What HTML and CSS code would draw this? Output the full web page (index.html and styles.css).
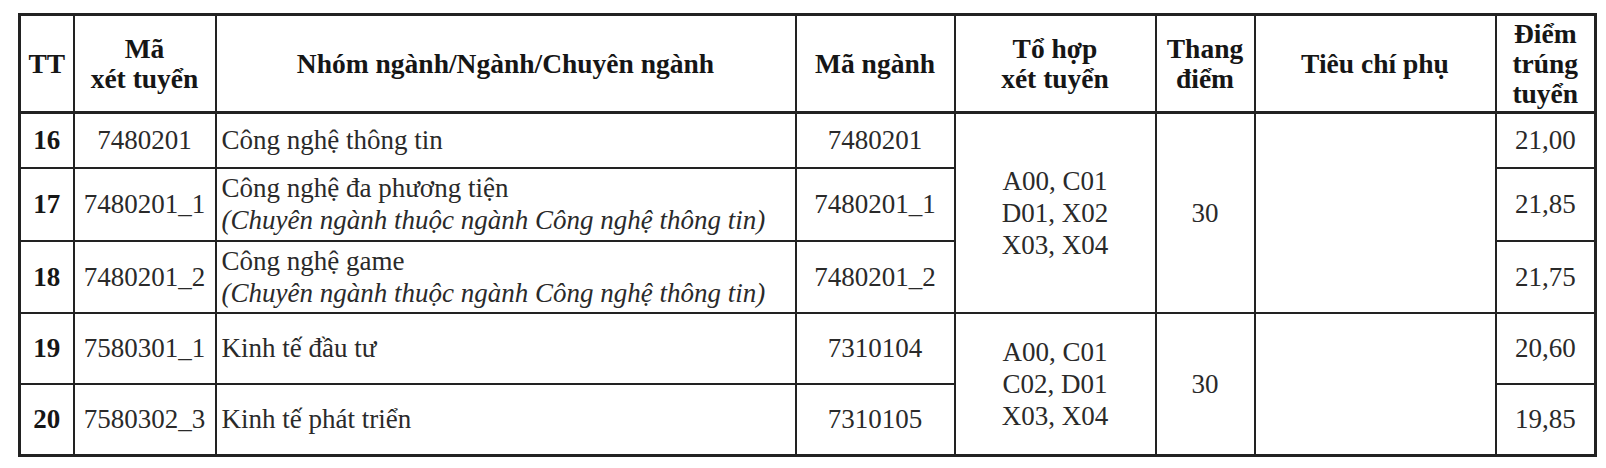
FILE: index.html
```html
<!DOCTYPE html>
<html lang="vi">
<head>
<meta charset="utf-8">
<title>Điểm trúng tuyển</title>
<link rel="stylesheet" href="styles.css">
</head>
<body>
<table class="scores">
  <colgroup>
    <col class="c-tt">
    <col class="c-ma">
    <col class="c-nganh">
    <col class="c-manganh">
    <col class="c-tohop">
    <col class="c-thang">
    <col class="c-tieuchi">
    <col class="c-diem">
  </colgroup>
  <thead>
    <tr class="r-head">
      <th>TT</th>
      <th>Mã<br>xét tuyển</th>
      <th>Nhóm ngành/Ngành/Chuyên ngành</th>
      <th>Mã ngành</th>
      <th>Tổ hợp<br>xét tuyển</th>
      <th>Thang<br>điểm</th>
      <th>Tiêu chí phụ</th>
      <th>Điểm<br>trúng<br>tuyển</th>
    </tr>
  </thead>
  <tbody>
    <tr class="r-16">
      <td class="tt">16</td>
      <td>7480201</td>
      <td class="name">Công nghệ thông tin</td>
      <td>7480201</td>
      <td rowspan="3">A00, C01<br>D01, X02<br>X03, X04</td>
      <td rowspan="3">30</td>
      <td rowspan="3"></td>
      <td>21,00</td>
    </tr>
    <tr class="r-17">
      <td class="tt">17</td>
      <td>7480201_1</td>
      <td class="name">Công nghệ đa phương tiện<br><i>(Chuyên ngành thuộc ngành Công nghệ thông tin)</i></td>
      <td>7480201_1</td>
      <td>21,85</td>
    </tr>
    <tr class="r-18">
      <td class="tt">18</td>
      <td>7480201_2</td>
      <td class="name">Công nghệ game<br><i>(Chuyên ngành thuộc ngành Công nghệ thông tin)</i></td>
      <td>7480201_2</td>
      <td>21,75</td>
    </tr>
    <tr class="r-19">
      <td class="tt">19</td>
      <td>7580301_1</td>
      <td class="name">Kinh tế đầu tư</td>
      <td>7310104</td>
      <td rowspan="2">A00, C01<br>C02, D01<br>X03, X04</td>
      <td rowspan="2">30</td>
      <td rowspan="2"></td>
      <td>20,60</td>
    </tr>
    <tr class="r-20">
      <td class="tt">20</td>
      <td>7580302_3</td>
      <td class="name">Kinh tế phát triển</td>
      <td>7310105</td>
      <td>19,85</td>
    </tr>
  </tbody>
</table>
</body>
</html>
```

FILE: styles.css
```css
html, body {
  margin: 0;
  padding: 0;
  background: #ffffff;
}

body {
  padding: 13px 0 0 18px;
  font-family: "Liberation Serif", "Times New Roman", serif;
  color: #2a2a2a;
}

.scores {
  border-collapse: collapse;
  table-layout: fixed;
  width: 1578px;
  border: 3px solid #222;
}

.c-tt { width: 54px; }
.c-ma { width: 142px; }
.c-nganh { width: 580px; }
.c-manganh { width: 159px; }
.c-tohop { width: 201px; }
.c-thang { width: 99px; }
.c-tieuchi { width: 241px; }
.c-diem { width: 100px; }

.scores th,
.scores td {
  border: 2px solid #222;
  padding: 0;
  text-align: center;
  vertical-align: middle;
  overflow: hidden;
  white-space: nowrap;
}

.scores th {
  font-size: 27.5px;
  font-weight: bold;
  color: #161616;
  line-height: 30px;
  border-bottom-width: 3px;
}

.scores td {
  font-size: 27px;
  font-weight: normal;
  line-height: 32px;
}

.scores td.tt {
  font-weight: bold;
  color: #161616;
}

.scores td.name {
  text-align: left;
  padding-left: 5px;
}

.r-head { height: 98px; }
.r-16 { height: 55px; }
.r-17 { height: 73px; }
.r-18 { height: 72px; }
.r-19 { height: 71px; }
.r-20 { height: 72px; }
```
